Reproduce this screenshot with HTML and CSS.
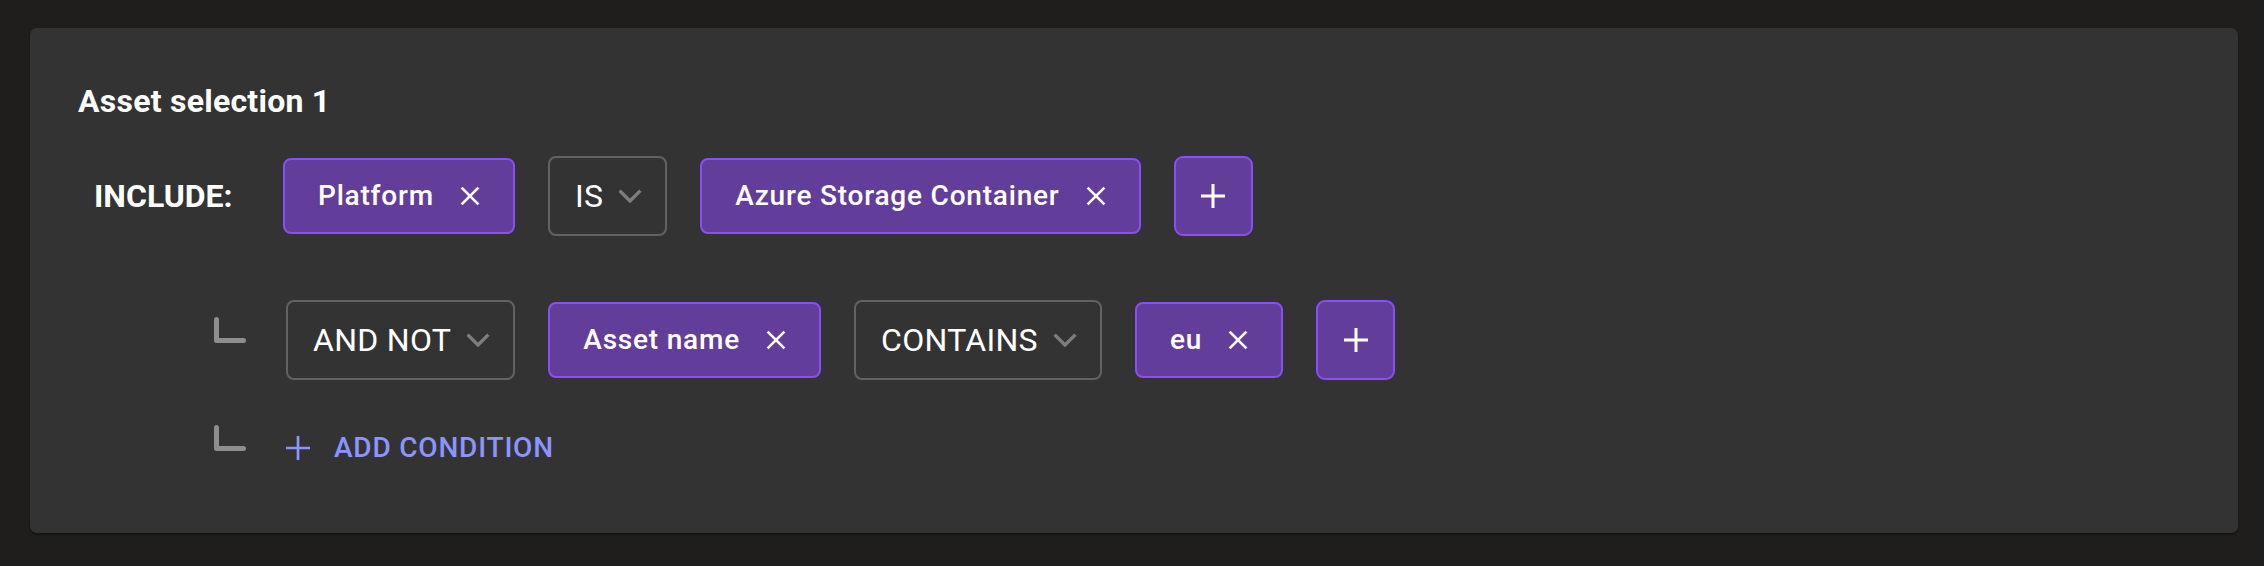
FILE: index.html
```html
<!DOCTYPE html>
<html lang="en">
<head>
<meta charset="utf-8">
<title>Asset selection</title>
<link rel="stylesheet" href="styles.css">
</head>
<body>
<section class="card">
  <h2 class="title">Asset selection 1</h2>

  <div class="row row-include">
    <span class="label">INCLUDE:</span>
    <span class="chip"><span class="chip-text">Platform</span><svg class="x" viewBox="0 0 20 20"><path d="M1.6 1.6L18.4 18.4M18.4 1.6L1.6 18.4"/></svg></span>
    <span class="select"><span class="select-text">IS</span><svg class="chev" viewBox="0 0 24 14"><path d="M1.6 1.6L12 12L22.4 1.6"/></svg></span>
    <span class="chip"><span class="chip-text">Azure Storage Container</span><svg class="x" viewBox="0 0 20 20"><path d="M1.6 1.6L18.4 18.4M18.4 1.6L1.6 18.4"/></svg></span>
    <button class="add-btn" type="button"><svg class="plus" viewBox="0 0 24 24"><path d="M12 0V24M0 12H24"/></svg></button>
  </div>

  <div class="row row-cond">
    <svg class="branch" viewBox="0 0 32 26"><path d="M2.5 2.5V23.5H29.5"/></svg>
    <span class="select"><span class="select-text">AND NOT</span><svg class="chev" viewBox="0 0 24 14"><path d="M1.6 1.6L12 12L22.4 1.6"/></svg></span>
    <span class="chip"><span class="chip-text">Asset name</span><svg class="x" viewBox="0 0 20 20"><path d="M1.6 1.6L18.4 18.4M18.4 1.6L1.6 18.4"/></svg></span>
    <span class="select"><span class="select-text">CONTAINS</span><svg class="chev" viewBox="0 0 24 14"><path d="M1.6 1.6L12 12L22.4 1.6"/></svg></span>
    <span class="chip"><span class="chip-text">eu</span><svg class="x" viewBox="0 0 20 20"><path d="M1.6 1.6L18.4 18.4M18.4 1.6L1.6 18.4"/></svg></span>
    <button class="add-btn" type="button"><svg class="plus" viewBox="0 0 24 24"><path d="M12 0V24M0 12H24"/></svg></button>
  </div>

  <div class="row row-add">
    <svg class="branch" viewBox="0 0 32 26"><path d="M2.5 2.5V23.5H29.5"/></svg>
    <button class="add-cond" type="button"><svg class="plus-link" viewBox="0 0 24 24"><path d="M12 0V24M0 12H24"/></svg><span>ADD CONDITION</span></button>
  </div>
</section>
</body>
</html>
```

FILE: styles.css
```css
html, body {
  margin: 0;
  padding: 0;
  background: #1f1e1c;
}

body {
  font-family: Roboto, "Noto Sans", "Liberation Sans", sans-serif;
  color: #ffffff;
  width: 2264px;
  height: 566px;
  overflow: hidden;
}

.card {
  box-sizing: border-box;
  width: 2208px;
  height: 505px;
  margin: 28px 0 0 30px;
  padding: 53px 48px 0 48px;
  background: #333333;
  border-radius: 7px;
  box-shadow: 0 2px 2px rgba(0, 0, 0, 0.35);
}

.title {
  margin: 0 0 35px 0;
  height: 40px;
  font-size: 32px;
  line-height: 40px;
  font-weight: 700;
  letter-spacing: 0.25px;
}

.row {
  display: flex;
  align-items: center;
  gap: 33px;
}

.row-include {
  height: 80px;
  padding-left: 16px;
  margin-bottom: 64px;
}

.label {
  flex: none;
  width: 156px;
  font-size: 32px;
  font-weight: 700;
  line-height: 40px;
}

.row-cond {
  height: 80px;
  padding-left: 136px;
  margin-bottom: 44px;
}

.row-add {
  height: 48px;
  padding-left: 136px;
  gap: 40px;
}

.branch {
  flex: none;
  width: 32px;
  height: 26px;
  margin-bottom: 21px;
  fill: none;
  stroke: #8e8e8e;
  stroke-width: 5;
  stroke-linecap: round;
  stroke-linejoin: round;
}

.row-cond .branch {
  margin-right: 7px;
}

.chip {
  flex: none;
  box-sizing: border-box;
  display: inline-flex;
  align-items: center;
  gap: 26px;
  height: 76px;
  padding: 0 33px 0 33px;
  background: #623e9a;
  border: 2px solid #8a4ef5;
  border-radius: 8px;
}

.chip-text {
  font-size: 28px;
  font-weight: 500;
  letter-spacing: 0.8px;
  line-height: 32px;
}

.x {
  flex: none;
  width: 20px;
  height: 20px;
  fill: none;
  stroke: #ffffff;
  stroke-width: 2.7;
}

.select {
  flex: none;
  box-sizing: border-box;
  display: inline-flex;
  align-items: center;
  gap: 15px;
  height: 80px;
  padding: 0 23px 0 25px;
  border: 2px solid #626262;
  border-radius: 8px;
}

.select-text {
  font-size: 32px;
  font-weight: 400;
  letter-spacing: 0.3px;
  line-height: 40px;
}

.chev {
  flex: none;
  width: 24px;
  height: 14px;
  fill: none;
  stroke: #7d7d7d;
  stroke-width: 3.4;
}

.add-btn {
  flex: none;
  box-sizing: border-box;
  display: inline-flex;
  align-items: center;
  justify-content: center;
  width: 79px;
  height: 80px;
  padding: 0;
  background: #623e9a;
  border: 2px solid #8a4ef5;
  border-radius: 9px;
}

.plus {
  width: 24px;
  height: 24px;
  fill: none;
  stroke: #ffffff;
  stroke-width: 3;
}

.add-cond {
  display: inline-flex;
  align-items: center;
  gap: 24px;
  height: 48px;
  padding: 0;
  background: none;
  border: none;
  font-family: inherit;
  font-size: 28px;
  font-weight: 500;
  letter-spacing: 0.8px;
  line-height: 48px;
  color: #8b94ff;
}

.plus-link {
  flex: none;
  width: 24px;
  height: 24px;
  fill: none;
  stroke: #8b94ff;
  stroke-width: 2.7;
}
```
